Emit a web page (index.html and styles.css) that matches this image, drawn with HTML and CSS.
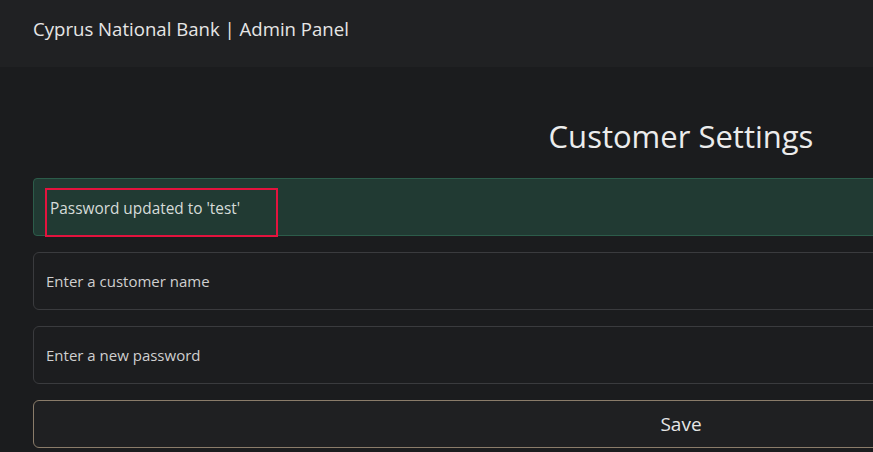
FILE: index.html
```html
<!DOCTYPE html>
<html>
<head>
<meta charset="utf-8">
<link rel="stylesheet" href="styles.css">
</head>
<body>
<header class="topbar">
  <span class="brand">Cyprus National Bank | Admin Panel</span>
</header>
<main class="container">
  <h1 class="title">Customer Settings</h1>
  <div class="alert"><span class="highlight">Password updated to 'test'</span></div>
  <input class="field" type="text" placeholder="Enter a customer name">
  <input class="field" type="password" placeholder="Enter a new password">
  <button class="save">Save</button>
</main>
</body>
</html>
```
FILE: styles.css
```css
html, body {
  margin: 0;
  padding: 0;
  background: #1b1c1e;
  overflow: hidden;
  font-family: "Open Sans", "Noto Sans", sans-serif;
  color: #e3e3e3;
}
.topbar {
  height: 67px;
  background: #202123;
  display: flex;
  align-items: center;
  padding: 0 33px 10px;
  box-sizing: border-box;
}
.brand {
  font-size: 18.6px;
  color: #e6e6e6;
}
.container {
  width: 1296px;
  margin-left: 33px;
  display: flex;
  flex-direction: column;
  gap: 16px;
}
.title {
  margin: 43px 0 0;
  font-weight: 400;
  font-size: 31px;
  text-align: center;
  color: #ececec;
  line-height: 52px;
}
.alert {
  height: 58px;
  box-sizing: border-box;
  background: #213a33;
  border: 1px solid #2c5c4a;
  border-radius: 4px;
  padding: 9px 0 0 11px;
}
.highlight {
  display: flex;
  align-items: center;
  width: 233px;
  height: 49px;
  box-sizing: border-box;
  border: 2px solid #e3133e;
  padding: 0 0 8px 3px;
  font-size: 15.4px;
  color: #d6dcd9;
}
.field {
  height: 58px;
  box-sizing: border-box;
  background: #1c1d1f;
  border: 1px solid #3a3b3e;
  border-radius: 6px;
  padding: 0 12px;
  font-family: inherit;
  font-size: 15px;
  color: #ddd;
  outline: none;
}
.field::placeholder {
  color: #cfcfcf;
  opacity: 1;
}
.save {
  height: 48px;
  background: #1f2022;
  border: 1px solid #8a7c6a;
  border-radius: 6px;
  font-family: inherit;
  font-size: 19px;
  color: #e6e6e6;
}
```
